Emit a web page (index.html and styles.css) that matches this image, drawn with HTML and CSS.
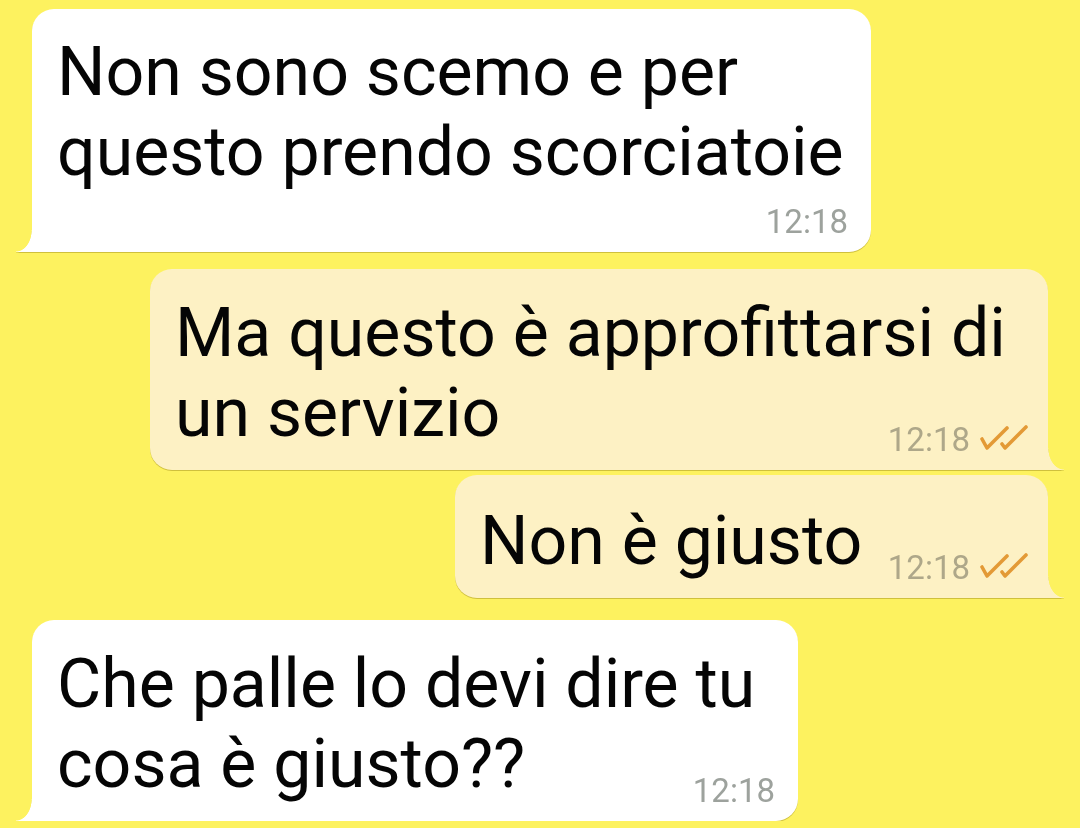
FILE: index.html
```html
<!DOCTYPE html>
<html lang="it">
<head>
  <meta charset="UTF-8">
  <meta name="viewport" content="width=device-width, initial-scale=1">
  <title>Chat</title>

  <link rel="stylesheet" href="styles.css">
</head>

<body>

  <div class="chat">

    <div class="bubble bubble--in bubble--first">
      <p class="bubble-text">Non sono scemo e per<br>questo prendo scorciatoie</p>
      <div class="meta meta--below">
        <span class="time">12:18</span>
      </div>
    </div>

    <div class="bubble bubble--out bubble--wide">
      <p class="bubble-text">Ma questo è approfittarsi di<br>un servizio</p>
      <div class="meta">
        <span class="time">12:18</span>
        <svg class="ticks" width="48" height="26" viewBox="0 0 48 26">
          <path d="M2 14 L7 23 L27 3" />
          <path d="M22 19 L25 23 L46 2" />
        </svg>
      </div>
    </div>

    <div class="bubble bubble--out bubble--short">
      <p class="bubble-text">Non è giusto</p>
      <div class="meta">
        <span class="time">12:18</span>
        <svg class="ticks" width="48" height="26" viewBox="0 0 48 26">
          <path d="M2 14 L7 23 L27 3" />
          <path d="M22 19 L25 23 L46 2" />
        </svg>
      </div>
    </div>

    <div class="bubble bubble--in bubble--last">
      <p class="bubble-text">Che palle lo devi dire tu<br>cosa è giusto??</p>
      <div class="meta">
        <span class="time">12:18</span>
      </div>
    </div>

  </div>

</body>
</html>
```

FILE: styles.css
```css
* {
  box-sizing: border-box;
}

body {
  margin: 0;
  background: #fdf25f;
  font-family: Roboto, "Noto Sans", "Liberation Sans", sans-serif;
  color: #050505;
}

.chat {
  display: flex;
  flex-direction: column;
  padding: 9px 32px 0 32px;
}

.bubble {
  position: relative;
  padding: 24px 23px 10px 25px;
  border-radius: 22px;
  filter: drop-shadow(0 1.5px 0.6px rgba(150, 130, 20, 0.45));
}

.bubble--in {
  align-self: flex-start;
  background: #fff;
  border-bottom-left-radius: 0;
}

.bubble--out {
  align-self: flex-end;
  background: #fdf1c4;
  border-bottom-right-radius: 0;
  padding-right: 20px;
}

/* little tail at the bottom corner */
.bubble::after {
  content: "";
  position: absolute;
  bottom: 0;
  width: 16px;
  height: 22px;
}

.bubble--in::after {
  left: -16px;
  background: radial-gradient(16px 22px at 0 0, transparent 96%, #fff 100%);
}

.bubble--out::after {
  right: -16px;
  background: radial-gradient(16px 22px at 100% 0, transparent 96%, #fdf1c4 100%);
}

.bubble--first { width: 839px; padding-top: 23px; }
.bubble--wide { width: 898px; margin-top: 17px; }
.bubble--short { width: 593px; margin-top: 5px; padding-top: 26px; }
.bubble--last { width: 766px; margin-top: 22px; }

.bubble-text {
  margin: 0;
  font-size: 68px;
  line-height: 80px;
  white-space: nowrap;
}

.meta {
  display: flex;
  justify-content: flex-end;
  align-items: center;
  gap: 10px;
  margin-top: -33px;
  font-size: 33px;
  line-height: 40px;
}

.meta--below {
  margin-top: 10px;
}

.bubble--in .time {
  color: #9da29d;
}

.bubble--out .time {
  color: #aea789;
}

.ticks {
  display: block;
  margin-top: -4px;
}

.ticks path {
  fill: none;
  stroke: #e39a36;
  stroke-width: 3.6;
  stroke-linecap: round;
  stroke-linejoin: round;
}
```
